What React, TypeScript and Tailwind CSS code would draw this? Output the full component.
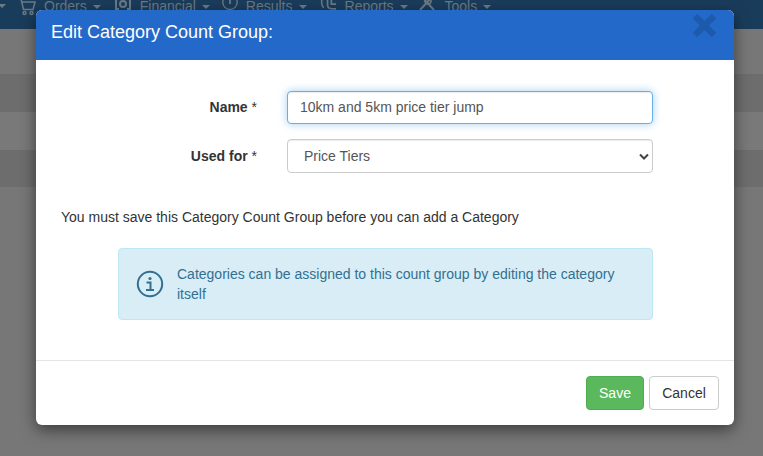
function NavItem({ icon, label, iconClass, className }: { icon: React.ReactNode; label: string; iconClass: string; className: string }) {
  return (
    <div className={`flex items-center ${className}`}>
      <svg className={`${iconClass} h-[20px] shrink-0 mt-[-3px]`} viewBox="0 0 20 20" fill="none" stroke="currentColor" strokeWidth="1.5">
        {icon}
      </svg>
      <span className="ml-[7px]">{label}</span>
      <span className="w-0 h-0 border-x-[4px] border-x-transparent border-t-[4px] border-t-[#6b7a85] ml-[6px] mt-[1px]" />
    </div>
  )
}

export default function App() {
  return (
    <div className="relative w-[763px] h-[456px] overflow-hidden bg-[#777777] font-['Liberation_Sans',Arial,sans-serif] text-[14px] text-[#333333]">
      <div className="h-[29px] bg-[#1a3c5b] shadow-[0_1px_3px_rgba(0,0,0,0.3)] overflow-hidden text-[#6b7a85] text-[14px]">
        <div className="flex items-center -mt-[7px] h-[26px]">
          <span className="w-0 h-0 border-x-[4px] border-x-transparent border-t-[4px] border-t-[#6b7a85] -ml-[2px] mr-[11px]" />
          <NavItem
            className="mr-[12px]"
            iconClass="w-[20px] mt-[2px]"
            label="Orders"
            icon={
              <>
                <path d="M1 2h3l2.5 10.5h9.5L18 5H5" />
                <circle cx="7.5" cy="16" r="1.5" />
                <circle cx="14.5" cy="16" r="1.5" />
              </>
            }
          />
          <NavItem
            className="mr-[11px]"
            iconClass="w-[20px]"
            label="Financial"
            icon={
              <>
                <path d="M3 4v10h3M17 4v10h-3" strokeWidth="2" />
                <circle cx="10" cy="9" r="3" strokeWidth="2" />
              </>
            }
          />
          <NavItem
            className="mr-[12px]"
            iconClass="w-[18px]"
            label="Results"
            icon={
              <>
                <circle cx="10" cy="7" r="8" />
                <path d="M10 3v6" strokeWidth="2" />
              </>
            }
          />
          <NavItem
            className="mr-[10px]"
            iconClass="w-[19px]"
            label="Reports"
            icon={
              <>
                <path d="M5 1c-3 3-3 9 0 12" strokeWidth="1.6" />
                <path d="M9 3v7c0 3 2 4 5 4h4M13 3v6h5" strokeWidth="1.8" />
              </>
            }
          />
          <NavItem
            className=""
            iconClass="w-[20px]"
            label="Tools"
            icon={
              <>
                <path d="M2 15L14 2M4 2l12 13" strokeWidth="2" />
                <circle cx="10" cy="6" r="3" />
              </>
            }
          />
        </div>
      </div>
      <div className="h-[45px] bg-[#777777]" />
      <div className="h-[38px] bg-[#6d6d6d]" />
      <div className="h-[38px] bg-[#797979]" />
      <div className="h-[37px] bg-[#6d6d6d]" />

      {/* modal */}
      <div className="absolute left-[36px] top-[10px] w-[698px] h-[415px] rounded-[6px] bg-white shadow-[0_5px_15px_rgba(0,0,0,0.5)] flex flex-col">
        <div className="relative h-[50px] shrink-0 bg-[#2369c9] rounded-t-[6px] pl-[15px] pt-[12px] text-white text-[18px] leading-[20px]">
          Edit Category Count Group:
          <svg className="absolute left-[656px] top-[3px]" width="25" height="25" viewBox="0 0 25 25">
            <path d="M3 3 L22 22 M22 3 L3 22" stroke="#1e5aab" strokeWidth="6.5" />
          </svg>
        </div>

        <div className="flex-1 pt-[31px]">
          <div className="flex items-center h-[34px] -mt-[1px]">
            <label className="w-[221px] text-right font-bold">
              Name <span className="font-normal">*</span>
            </label>
            <input
              readOnly
              value="10km and 5km price tier jump"
              className="ml-[30px] w-[366px] h-[33px] rounded-[4px] border border-[#66afe9] bg-white px-[12px] text-[14px] text-[#555555] outline-none shadow-[inset_0_1px_1px_rgba(0,0,0,0.075),0_0_8px_rgba(102,175,233,0.6)]"
            />
          </div>
          <div className="flex items-center h-[34px] mt-[15px]">
            <label className="w-[221px] text-right font-bold">
              Used for <span className="font-normal">*</span>
            </label>
            <div className="relative ml-[30px] w-[366px] h-[34px] rounded-[4px] border border-[#cccccc] bg-white pl-[16px] flex items-center text-[#555555] shadow-[inset_0_1px_1px_rgba(0,0,0,0.075)]">
              Price Tiers
              <svg className="absolute right-[3px] top-[13px]" width="10" height="8" viewBox="0 0 10 8">
                <path d="M1 1.5 L5 5.5 L9 1.5" fill="none" stroke="#444444" strokeWidth="2" />
              </svg>
            </div>
          </div>

          <p className="ml-[25px] mt-[34px] leading-[20px]">You must save this Category Count Group before you can add a Category</p>

          <div className="ml-[82px] mt-[21px] w-[535px] h-[72px] rounded-[4px] border border-[#bce8f1] bg-[#d9edf7] flex items-center text-[#31708f]">
            <svg className="ml-[17px] shrink-0" width="28" height="28" viewBox="0 0 28 28" fill="none" stroke="currentColor">
              <circle cx="14" cy="14" r="12.2" strokeWidth="2" />
              <circle cx="14" cy="8.5" r="1.6" fill="currentColor" stroke="none" />
              <path d="M10.5 12.5H14.5V19.5M10 20H18" strokeWidth="2" />
            </svg>
            <p className="ml-[13px] w-[450px] leading-[20px]">Categories can be assigned to this count group by editing the category itself</p>
          </div>
        </div>

        <div className="h-[65px] shrink-0 border-t border-[#e5e5e5] flex justify-end items-start pt-[15px] pr-[15px] gap-[5px]">
          <button className="w-[58px] h-[34px] rounded-[4px] border border-[#4cae4c] bg-[#5cb85c] text-white">Save</button>
          <button className="w-[70px] h-[34px] rounded-[4px] border border-[#cccccc] bg-white text-[#333333]">Cancel</button>
        </div>
      </div>
    </div>
  )
}
